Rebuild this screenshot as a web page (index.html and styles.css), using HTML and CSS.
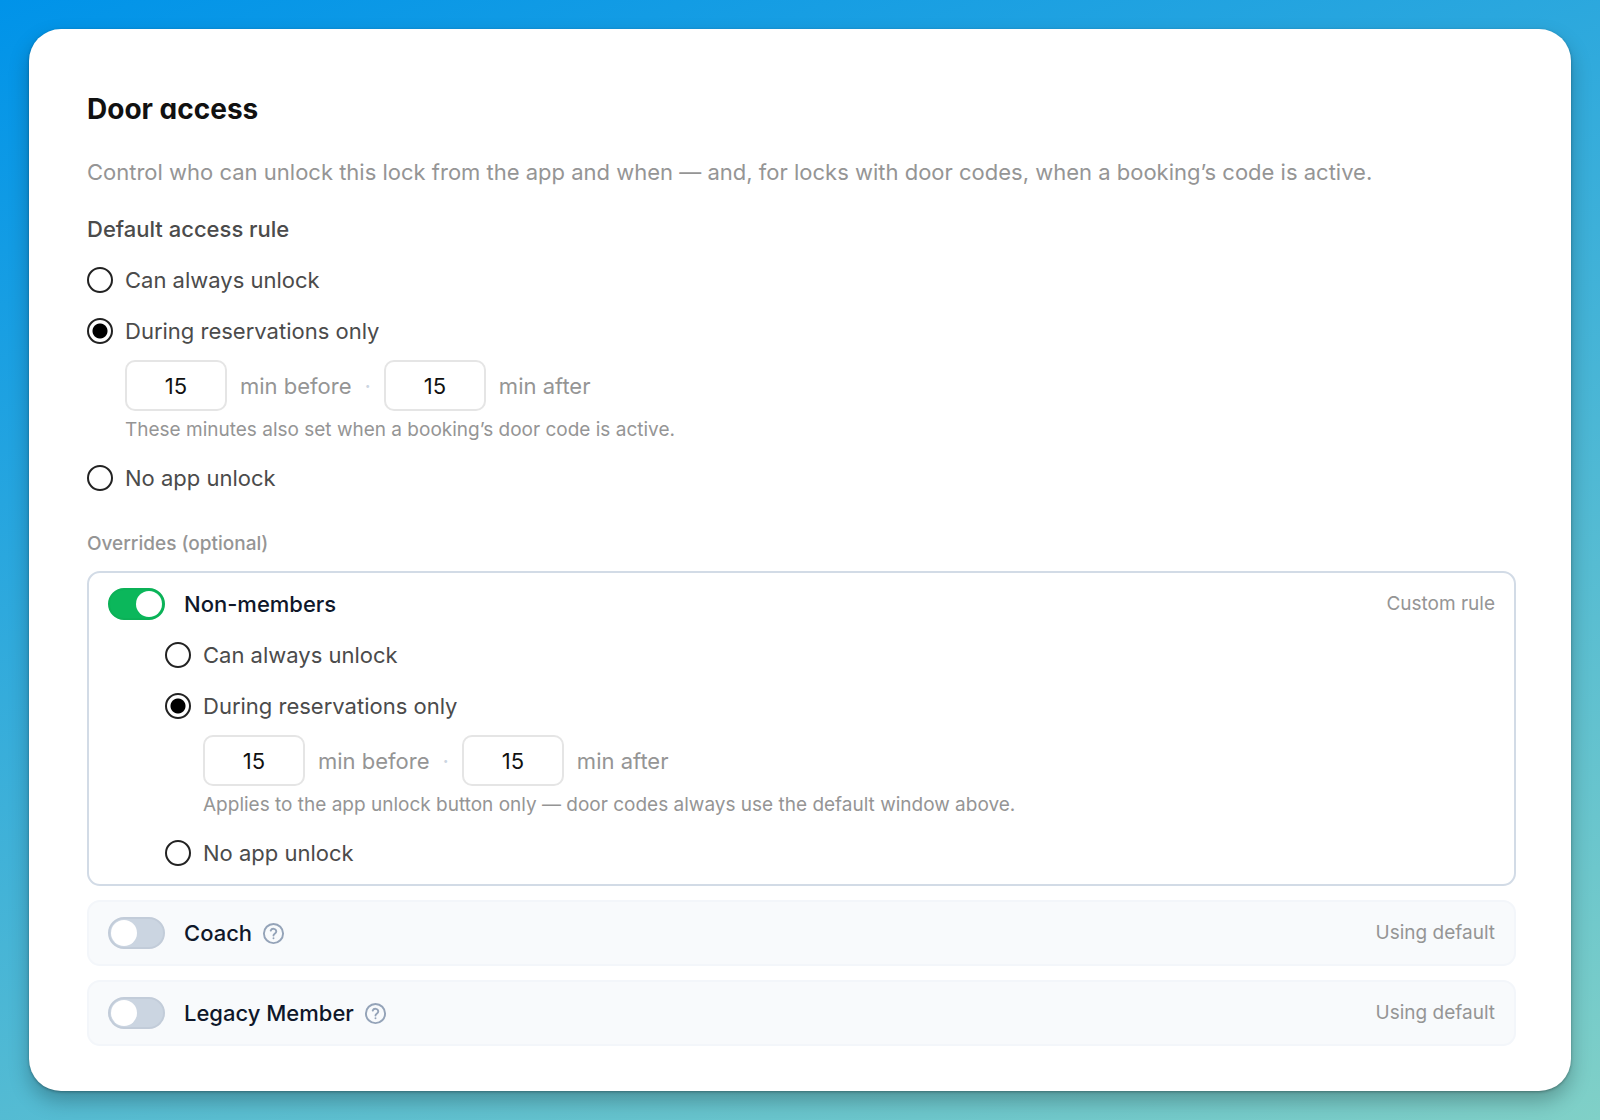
FILE: index.html
```html
<!DOCTYPE html>
<html lang="en">
<head>
    <meta charset="UTF-8">
    <meta name="viewport" content="width=device-width, initial-scale=1.0">
    <title>Door access</title>
    <link rel="stylesheet" href="styles.css">
</head>
<body>
    <main class="card">
        <h1>Door access</h1>
        <p class="description">Control who can unlock this lock from the app and when — and, for locks with door codes, when a booking’s code is active.</p>

        <fieldset class="default-rule">
            <legend>Default access rule</legend>
            <div class="rules">
                <label class="radio-row">
                    <input type="radio" name="default-rule">
                    <span>Can always unlock</span>
                </label>
                <div class="rule">
                    <label class="radio-row">
                        <input type="radio" name="default-rule" checked>
                        <span>During reservations only</span>
                    </label>
                    <div class="window">
                        <input type="text" inputmode="numeric" id="default-before" value="15">
                        <label for="default-before">min before</label>
                        <span class="dot">·</span>
                        <input type="text" inputmode="numeric" id="default-after" value="15">
                        <label for="default-after">min after</label>
                    </div>
                    <p class="hint">These minutes also set when a booking’s door code is active.</p>
                </div>
                <label class="radio-row">
                    <input type="radio" name="default-rule">
                    <span>No app unlock</span>
                </label>
            </div>
        </fieldset>

        <h2>Overrides (optional)</h2>
        <div class="overrides">
            <section class="override active">
                <div class="override-header">
                    <input type="checkbox" class="toggle" id="non-members" checked>
                    <label for="non-members">Non-members</label>
                    <span class="status">Custom rule</span>
                </div>
                <div class="rules nested">
                    <label class="radio-row">
                        <input type="radio" name="non-members-rule">
                        <span>Can always unlock</span>
                    </label>
                    <div class="rule">
                        <label class="radio-row">
                            <input type="radio" name="non-members-rule" checked>
                            <span>During reservations only</span>
                        </label>
                        <div class="window">
                            <input type="text" inputmode="numeric" id="non-members-before" value="15">
                            <label for="non-members-before">min before</label>
                            <span class="dot">·</span>
                            <input type="text" inputmode="numeric" id="non-members-after" value="15">
                            <label for="non-members-after">min after</label>
                        </div>
                        <p class="hint">Applies to the app unlock button only — door codes always use the default window above.</p>
                    </div>
                    <label class="radio-row">
                        <input type="radio" name="non-members-rule">
                        <span>No app unlock</span>
                    </label>
                </div>
            </section>

            <section class="override">
                <div class="override-header">
                    <input type="checkbox" class="toggle" id="coach">
                    <label for="coach">Coach</label>
                    <button type="button" class="help" aria-label="About Coach">
                        <svg viewBox="0 0 24 24"><circle cx="12" cy="12" r="10"/><path d="M9.1 9a3 3 0 0 1 5.8 1c0 2-2.9 2.6-2.9 4"/><path d="M12 17h.01"/></svg>
                    </button>
                    <span class="status">Using default</span>
                </div>
            </section>

            <section class="override">
                <div class="override-header">
                    <input type="checkbox" class="toggle" id="legacy-member">
                    <label for="legacy-member">Legacy Member</label>
                    <button type="button" class="help" aria-label="About Legacy Member">
                        <svg viewBox="0 0 24 24"><circle cx="12" cy="12" r="10"/><path d="M9.1 9a3 3 0 0 1 5.8 1c0 2-2.9 2.6-2.9 4"/><path d="M12 17h.01"/></svg>
                    </button>
                    <span class="status">Using default</span>
                </div>
            </section>
        </div>
    </main>
</body>
</html>
```
FILE: styles.css
```css
* {
    box-sizing: border-box;
}

body {
    font-family: Inter, "Liberation Sans", sans-serif;
    font-size: 22px;
    line-height: 32px;
    color: #4b4b4b;
    margin: 0;
    padding: 29px;
    min-height: 100vh;
    background: linear-gradient(160deg, #0093e9 0%, #80d0c7 100%);
}

.card {
    background-color: #fff;
    border-radius: 32px;
    padding: 62px 55px 45px 58px;
    box-shadow: 0 10px 20px rgba(0, 0, 0, 0.25), 0 1px 3px rgba(0, 0, 0, 0.3);
}

h1 {
    font-size: 28px;
    line-height: 36px;
    font-weight: 700;
    font-feature-settings: "cv11";
    color: #111;
    margin: 0 0 29px;
}

.description {
    color: #959595;
    margin: 0 0 25px;
}

fieldset {
    border: 0;
    margin: 0 0 37px;
    padding: 0;
    min-width: 0;
}

legend {
    font-weight: 500;
    padding: 0;
    margin-bottom: 19px;
}

.rules {
    display: flex;
    flex-direction: column;
    gap: 19px;
}

.nested {
    margin-top: 19px;
    padding-left: 57px;
}

.radio-row {
    display: flex;
    align-items: center;
    gap: 12px;
}

.radio-row input {
    appearance: none;
    flex: none;
    width: 26px;
    height: 26px;
    margin: 0;
    border: 2px solid #222;
    border-radius: 50%;
    background-color: #fff;
}

.radio-row input:checked {
    background-image: radial-gradient(circle, #000 7px, transparent 8px);
}

.window {
    display: flex;
    align-items: center;
    gap: 13px;
    margin: 13px 0 6px 38px;
    color: #959595;
}

.window input {
    width: 102px;
    height: 51px;
    padding: 0;
    border: 2px solid #e5e5e5;
    border-radius: 10px;
    background-color: #fff;
    font: inherit;
    color: #111;
    text-align: center;
}

.dot {
    color: #cbd5e1;
}

.hint {
    font-size: 19px;
    line-height: 26px;
    color: #959595;
    margin: 0 0 0 38px;
}

h2 {
    font-size: 19px;
    line-height: 26px;
    font-weight: 500;
    color: #959595;
    margin: 0 0 14px;
}

.overrides {
    display: flex;
    flex-direction: column;
    gap: 14px;
}

.override {
    padding: 15px 19px;
    border: 2px solid #f3f6fa;
    border-radius: 13px;
    background-color: #f8fafc;
}

.override.active {
    border-color: #d2dbe6;
    background-color: #fff;
}

.override-header {
    display: flex;
    align-items: center;
}

.override-header label {
    font-weight: 500;
    color: #0f172a;
    margin-left: 19px;
}

.toggle {
    appearance: none;
    flex: none;
    display: flex;
    width: 57px;
    height: 32px;
    margin: 0;
    padding: 1px;
    border: 2px solid #c2ccd9;
    border-radius: 16px;
    background-color: #cbd5e1;
}

.toggle::before {
    content: "";
    width: 26px;
    height: 26px;
    border-radius: 50%;
    background-color: #fff;
}

.toggle:checked {
    justify-content: flex-end;
    border-color: #0bb157;
    background-color: #0bb75b;
}

.help {
    display: flex;
    margin-left: 10px;
    padding: 0;
    border: 0;
    background: none;
    color: #94a3b8;
}

.help svg {
    width: 23px;
    height: 23px;
    fill: none;
    stroke: currentColor;
    stroke-width: 2;
    stroke-linecap: round;
    stroke-linejoin: round;
}

.status {
    margin-left: auto;
    font-size: 19px;
    color: #959595;
}
```
